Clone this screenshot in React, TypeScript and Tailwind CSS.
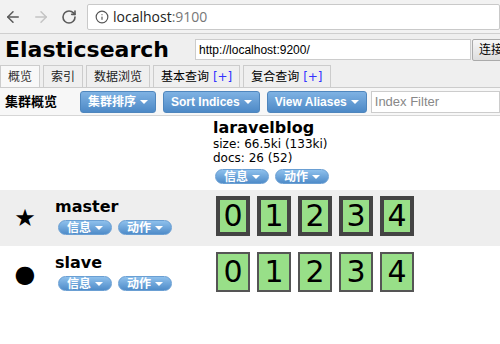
import { ArrowLeft, ArrowRight, RotateCw, Info } from 'lucide-react';

const font = { fontFamily: '"DejaVu Sans", Verdana, "Noto Sans CJK SC", sans-serif' };

function Caret() {
  return <span className="ml-1 inline-block w-0 h-0 border-l-[4px] border-r-[4px] border-t-[4px] border-l-transparent border-r-transparent border-t-white align-middle" />;
}

function ToolButton({ label }: { label: string }) {
  return (
    <button className="h-[22px] px-[7px] shrink-0 rounded-[3px] border border-[#4f86bd] bg-gradient-to-b from-[#7fb2e3] to-[#4d89c6] text-white text-[12px] font-bold flex items-center whitespace-nowrap">
      {label}
      <Caret />
    </button>
  );
}

function PillButton({ label }: { label: string }) {
  return (
    <button className="h-[15px] px-[8px] rounded-full border border-[#6a9fd3] bg-gradient-to-b from-[#8ec0ec] to-[#4f8cc9] text-white text-[12px] font-bold flex items-center leading-none whitespace-nowrap">
      {label}
      <Caret />
    </button>
  );
}

function Shard({ n, primary }: { n: number; primary: boolean }) {
  return (
    <div
      className={`w-[34px] h-[40px] bg-[#98df88] flex items-center justify-center text-[30px] text-black leading-none ${
        primary ? 'border-[4px] border-[#444]' : 'border-[2px] border-[#555]'
      }`}
    >
      {n}
    </div>
  );
}

function NodeRow({ name, master }: { name: string; master: boolean }) {
  return (
    <div className={`flex h-[56px] ${master ? 'bg-[#eeeeee]' : 'bg-white'}`}>
      <div className="w-[50px] flex items-center justify-center text-[24px] leading-none">
        {master ? '★' : '●'}
      </div>
      <div className="w-[163px] pt-[8px] pl-[5px]">
        <div className="text-[16px] font-bold leading-[18px] text-black">{name}</div>
        <div className="flex gap-[6px] mt-[4px] ml-[3px]">
          <PillButton label="信息" />
          <PillButton label="动作" />
        </div>
      </div>
      <div className="flex gap-[7px] pt-[6px] pl-[3px]">
        {[0, 1, 2, 3, 4].map((n) => (
          <Shard key={n} n={n} primary={master} />
        ))}
      </div>
    </div>
  );
}

export default function App() {
  const tabs = ['概览', '索引', '数据浏览'];

  return (
    <div className="w-[500px] h-[344px] overflow-hidden bg-white text-black" style={font}>
      {/* browser chrome */}
      <div className="h-[34px] bg-[#f2f2f2] border-b border-[#cfcfcf] flex items-center">
        <ArrowLeft size={18} strokeWidth={2} className="ml-[4px] text-[#5a5a5a]" />
        <ArrowRight size={18} strokeWidth={2} className="ml-[10px] text-[#c4c4c4]" />
        <RotateCw size={16} strokeWidth={2.4} className="ml-[11px] text-[#5a5a5a]" />
        <div className="ml-[10px] flex-1 h-[26px] bg-white border border-[#c9c9c9] rounded-[2px] flex items-center pl-[7px]">
          <Info size={14} className="text-[#555]" />
          <span className="ml-[4px] text-[14px] text-[#222]" style={{ fontFamily: '"Open Sans", sans-serif' }}>
            localhost<span className="text-[#777]">:9100</span>
          </span>
        </div>
      </div>

      {/* header */}
      <div className="bg-[#efefef]">
        <div className="h-[31px] flex items-center overflow-hidden">
          <h1 className="ml-[5px] shrink-0 text-[22px] font-bold leading-none whitespace-nowrap">
            Elasticsearch
          </h1>
          <input
            readOnly
            value="http://localhost:9200/"
            className="ml-[26px] shrink-0 w-[276px] h-[21px] bg-white border border-[#ccc] px-[3px] text-[12px] outline-none"
            style={{ fontFamily: '"Liberation Sans", Arial, sans-serif' }}
          />
          <button className="ml-[1px] shrink-0 h-[22px] px-[6px] border border-[#aaa] rounded-[2px] bg-gradient-to-b from-[#f6f6f6] to-[#dedede] text-[12px] whitespace-nowrap">
            连接
          </button>
        </div>
        <div className="h-[23px] flex items-end gap-[3px] border-b border-[#ccc]">
          {tabs.map((t, i) => (
            <div
              key={t}
              className={`h-[22px] px-[7px] border border-b-0 border-[#ccc] flex items-center text-[12px] whitespace-nowrap ${
                i === 0 ? 'bg-[#f8f8f8] text-[#333]' : 'bg-[#efefef] text-[#222]'
              }`}
            >
              {t}
            </div>
          ))}
          <div className="h-[22px] px-[7px] border border-b-0 border-[#ccc] flex items-center text-[12px] whitespace-nowrap">
            基本查询&nbsp;<span className="text-[#3333ff]">[+]</span>
          </div>
          <div className="h-[22px] px-[7px] border border-b-0 border-[#ccc] flex items-center text-[12px] whitespace-nowrap">
            复合查询&nbsp;<span className="text-[#3333ff]">[+]</span>
          </div>
        </div>
      </div>

      {/* toolbar */}
      <div className="h-[28px] bg-[#f7f7f7] border-b border-[#d6d6d6] flex items-center">
        <span className="ml-[5px] shrink-0 whitespace-nowrap text-[13px] font-bold">集群概览</span>
        <div className="ml-[23px] flex gap-[7px] shrink-0" style={{ fontFamily: '"Liberation Sans", Arial, "Noto Sans CJK SC", sans-serif' }}>
          <ToolButton label="集群排序" />
          <ToolButton label="Sort Indices" />
          <ToolButton label="View Aliases" />
        </div>
        <input
          readOnly
          placeholder="Index Filter"
          className="ml-[4px] min-w-0 flex-1 h-[22px] bg-white border border-[#ccc] px-[3px] text-[13px] outline-none placeholder:text-[#888]"
          style={{ fontFamily: '"Liberation Sans", Arial, sans-serif' }}
        />
      </div>

      {/* index header */}
      <div className="flex h-[74px] bg-white">
        <div className="w-[213px]" />
        <div className="pt-[3px]">
          <div className="text-[16px] font-bold leading-[18px]">laravelblog</div>
          <div className="text-[12px] leading-[14px]">size: 66.5ki (133ki)</div>
          <div className="text-[12px] leading-[14px]">docs: 26 (52)</div>
          <div className="flex gap-[6px] mt-[4px] ml-[2px]">
            <PillButton label="信息" />
            <PillButton label="动作" />
          </div>
        </div>
      </div>

      <NodeRow name="master" master />
      <NodeRow name="slave" master={false} />
    </div>
  );
}
